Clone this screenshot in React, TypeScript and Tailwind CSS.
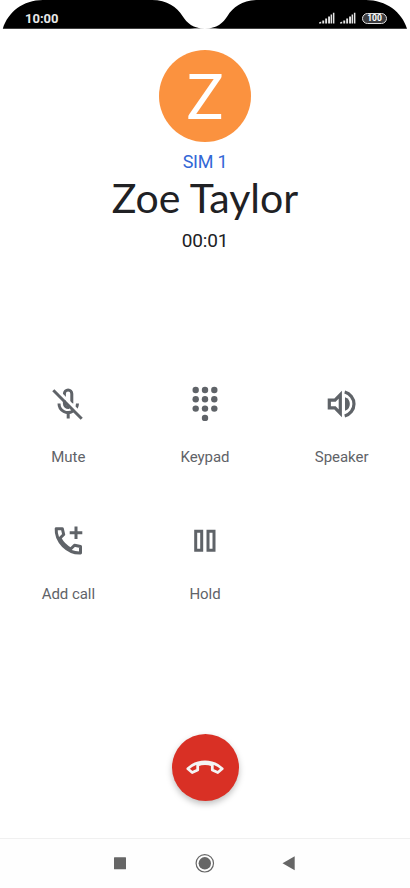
import React from 'react';

const StatusBar: React.FC = () => {
  return (
    <header className="relative h-[29px] w-full">
      <svg className="absolute inset-0" width="410" height="29" viewBox="0 0 410 29">
        <path
          d="M2.8 28.7C8 12 23 0 43 0H152C167 0 177 7 182.500 16C187 23 193 28.500 205 28.700C217 28.500 223 23 227.500 16C233 7 243 0 258 0H366C386 0 402 12 407 28.700Z"
          fill="#000"
        />
        <path d="M190 29C197 28.300 200 28.600 205 28.600S213 28.300 220 29Z" fill="#fff" />
      </svg>
      <div className="relative flex h-full items-center justify-between pl-[25px] pr-[23px] pt-[7px]">
        <span className="text-[13px] font-bold leading-[15px] text-[#e8e8e8]">10:00</span>
        <div className="flex items-center gap-[5px]">
          <Signal />
          <Signal />
          <span className="ml-px flex h-[11px] w-[25px] items-center justify-center rounded-full border border-[#e0e0e0] bg-[#3c3c3f] text-[8.500px] font-bold leading-none text-white">
            100
          </span>
        </div>
      </div>
    </header>
  );
};

const Signal: React.FC = () => (
  <svg width="16" height="12" viewBox="0 0 16 12" fill="#e4e4e4">
    <path d="M0 11.500V10.500L2.200 9.500V11.500ZM3.300 8.500H5.200V11.500H3.300ZM6.200 6.500H8.100V11.500H6.200ZM9.100 4.500H11V11.500H9.100ZM11.600 2.500H13.100V11.500H11.600ZM13.900 .8H15.400V11.500H13.900Z" />
  </svg>
);

const MuteIcon: React.FC = () => (
  <svg width="36" height="36" viewBox="0 0 36 36" fill="none" stroke="#5f6368" strokeWidth="3">
    <path d="M14.400 12V7.800a3.700 3.700 0 0 1 7.400 0V17.500" />
    <path d="M27.500 17.500q-.1 2.700-1.300 4.700" />
    <path d="M6.300 3.300L33.500 30.500" stroke="#fff" strokeWidth="3" />
    <path d="M14.400 14.500V17.500a4 4 0 0 0 4.600 4" />
    <path d="M9 17.500a9 9 0 0 0 14 7.500M18.200 26v6.500" />
    <path d="M3.300 4.300L31.700 32.700" />
  </svg>
);

const KeypadIcon: React.FC = () => (
  <svg width="36" height="36" viewBox="0 0 36 36" fill="#5f6368">
    <circle cx="8.700" cy="4" r="3.200" />
    <circle cx="18" cy="4" r="3.200" />
    <circle cx="27.300" cy="4" r="3.200" />
    <circle cx="8.700" cy="13.300" r="3.200" />
    <circle cx="18" cy="13.300" r="3.200" />
    <circle cx="27.300" cy="13.300" r="3.200" />
    <circle cx="8.700" cy="22.600" r="3.200" />
    <circle cx="18" cy="22.600" r="3.200" />
    <circle cx="27.300" cy="22.600" r="3.200" />
    <circle cx="18" cy="31.900" r="3.200" />
  </svg>
);

const SpeakerIcon: React.FC = () => (
  <svg width="36" height="36" viewBox="0 0 36 36">
    <path
      d="M5.300 14.200H11L16.300 8.700V27.300L11 21.800H5.300Z"
      fill="none"
      stroke="#5f6368"
      strokeWidth="3.200"
    />
    <path d="M21 11.200a7.200 7.200 0 0 1 0 13.600Z" fill="#5f6368" />
    <path d="M20.700 6a12.400 12.400 0 0 1 0 24" fill="none" stroke="#5f6368" strokeWidth="3.200" />
  </svg>
);

const AddCallIcon: React.FC = () => (
  <svg width="36" height="36" viewBox="0 0 36 36" fill="none" stroke="#5f6368" strokeWidth="3">
    <path
      d="M6.200 5.700H12.300L13.700 11.500L9.900 15.300C12.500 20.200 16 23.700 20.700 26L24.500 22.200L30.500 23.500V30C17.500 30.500 5.500 18.500 6.200 5.700Z"
      strokeLinejoin="round"
    />
    <path d="M26 3.500V16M19.700 9.700H32.300" />
  </svg>
);

const HoldIcon: React.FC = () => (
  <svg width="36" height="36" viewBox="0 0 36 36" fill="none" stroke="#5f6368" strokeWidth="3">
    <path d="M8.700 8.200H14.700V27.200H8.700ZM21 8.200H27V27.200H21Z" />
  </svg>
);

const actions = [
  { label: 'Mute', icon: <MuteIcon /> },
  { label: 'Keypad', icon: <KeypadIcon /> },
  { label: 'Speaker', icon: <SpeakerIcon /> },
  { label: 'Add call', icon: <AddCallIcon /> },
  { label: 'Hold', icon: <HoldIcon /> },
];

const NavigationBar: React.FC = () => {
  return (
    <nav className="flex h-[50px] items-center justify-center border-t border-[#f0f0f0] bg-[#fefefe]">
      <svg className="mb-px" width="182" height="20" viewBox="0 0 182 20" fill="#666">
        <rect x="0" y="4.300" width="12" height="12" rx=".5" />
        <circle cx="90.800" cy="10.300" r="6.200" />
        <circle cx="90.800" cy="10.300" r="8.700" fill="none" stroke="#666" strokeWidth="1.200" />
        <path d="M168.500 10.300L180.700 3.300V17.300Z" />
      </svg>
    </nav>
  );
};

const App: React.FC = () => {
  return (
    <div className="flex h-[888px] w-[410px] flex-col overflow-hidden bg-white font-[Roboto,sans-serif]">
      <StatusBar />

      <main className="flex flex-1 flex-col items-center">
        <div className="mt-[21px] flex size-[92px] items-center justify-center rounded-full bg-[#fb923f] pb-px font-[Lato,sans-serif] text-[61px] leading-none text-white">
          Z
        </div>
        <p className="mt-2 text-[18px] leading-6 tracking-[-0.25px] text-[#3367d6]">SIM 1</p>
        <h1 className="mt-0.5 font-[Lato,sans-serif] text-[41px] leading-[44px] text-[#202124]">Zoe Taylor</h1>
        <p className="mt-[9px] text-[19px] leading-6 tracking-[-0.2px] text-[#202124]">00:01</p>

        <div className="mt-[133px] grid w-full grid-cols-3 gap-y-[58px]">
          {actions.map((action) => (
            <button key={action.label} className="flex h-[79px] flex-col items-center justify-between">
              {action.icon}
              <span className="text-[15px] leading-4 tracking-[-0.05px] text-[#5f6368]">{action.label}</span>
            </button>
          ))}
        </div>

        <button className="mt-[132px] flex size-[67px] items-center justify-center rounded-full bg-[#d93025] shadow-[0_3px_6px_rgba(0,0,0,0.25)]">
          <svg width="40" height="20" viewBox="0 0 40 20" fill="none" stroke="#f4f4f4" strokeWidth="2.800" strokeLinejoin="round">
            <path d="M2.800 10.800C12 1.500 28 1.500 37.200 10.800L32.800 14.500L27.300 12V7C23 5.200 17 5.200 12.700 7V12L7.200 14.500Z" />
          </svg>
        </button>
      </main>

      <NavigationBar />
    </div>
  );
};

export default App;
